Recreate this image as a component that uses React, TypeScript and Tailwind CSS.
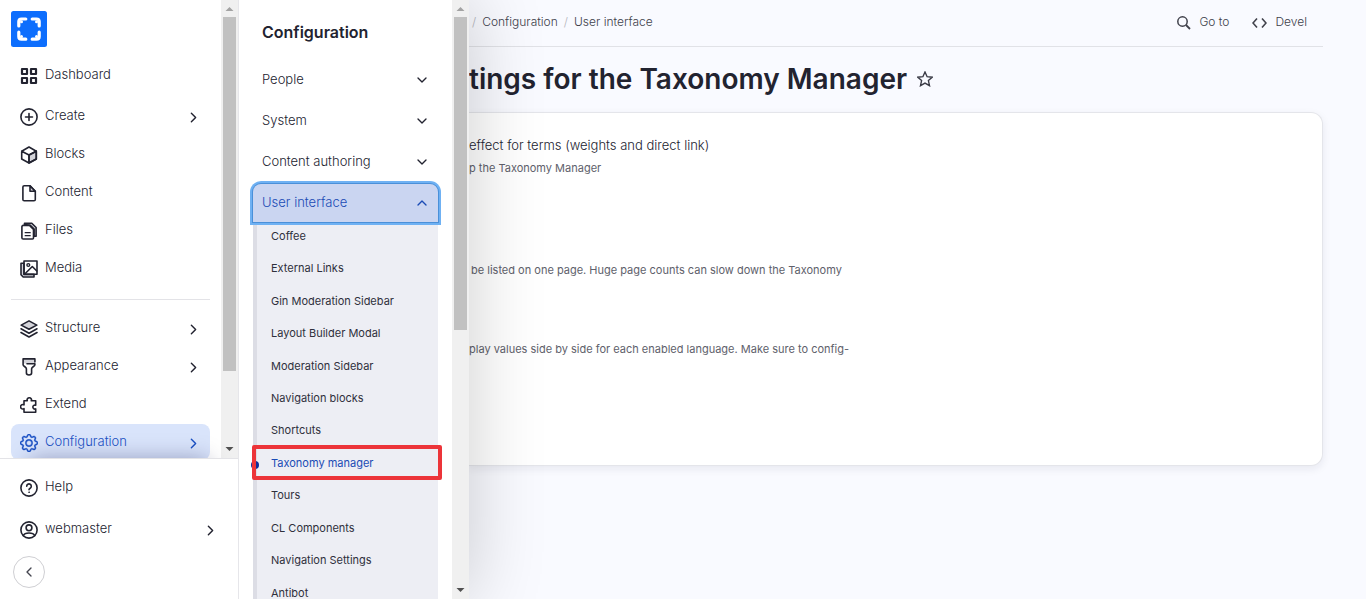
import React from 'react';
import { BsGear } from 'react-icons/bs';
import { ChevronDown, ChevronLeft, ChevronRight, ChevronUp } from 'lucide-react';

function Icon({ children }: { children: React.ReactNode }) {
  return (
    <svg
      className="shrink-0"
      width="18"
      height="18"
      viewBox="0 0 18 18"
      fill="none"
      stroke="currentColor"
      strokeWidth="1.6"
      strokeLinejoin="round"
      strokeLinecap="round"
      aria-hidden="true"
    >
      {children}
    </svg>
  );
}

const icons: Record<string, React.ReactNode> = {
  dashboard: (
    <Icon>
      <path d="M2 2h5v5H2zM11 2h5v5h-5zM2 11h5v5H2zM11 11h5v5h-5z" strokeWidth="2.2" />
    </Icon>
  ),
  create: (
    <Icon>
      <circle cx="9" cy="9" r="8.1" />
      <path d="M9 5.5v7M5.5 9h7" />
    </Icon>
  ),
  blocks: (
    <Icon>
      <path d="M9 9l7.3-3.8v7.8L9 17z" fill="#d4d4da" />
      <path d="M9 1l7.3 4.2v7.8L9 17l-7.3-4V5.2zM1.7 5.2L9 9l7.3-3.8M9 9v8" />
    </Icon>
  ),
  content: (
    <Icon>
      <path d="M10 1.8l5.3 5.4H10z" fill="#d4d4da" />
      <path d="M4.2 1.8H10l5.3 5.4v8.3a1.3 1.3 0 0 1-1.3 1.3H4.2a1.3 1.3 0 0 1-1.3-1.3V3.1a1.3 1.3 0 0 1 1.3-1.3z" />
    </Icon>
  ),
  files: (
    <Icon>
      <path d="M4.5 2.5V1.2h7.3l4.3 4.3v8.8h-2V7L10 3.2z" fill="#d4d4da" />
      <path d="M3.2 3.4h6.3l4 4V16a1 1 0 0 1-1 1H3.2a1.3 1.3 0 0 1-1.3-1.3v-11a1.3 1.3 0 0 1 1.3-1.3z" fill="#fff" />
      <path d="M5.2 10.7h5M5.2 13.7h5" strokeWidth="1.3" />
    </Icon>
  ),
  media: (
    <Icon>
      <path d="M4 3.3H1v11.400l2.200 2.300H14v-2.600H4z" fill="#d4d4da" />
      <path d="M4 1h13v13.200H4z" />
      <circle cx="8.3" cy="5" r="1.4" strokeWidth="1.4" />
      <path d="M5 13.7l7.3-7.2 4.5 4.5" />
    </Icon>
  ),
  structure: (
    <Icon>
      <path d="M9 .9l7.8 4.2L9 9.300 1.200 5.100z" fill="#d4d4da" />
      <path d="M1 8.800l8 4.400 8-4.400M1 12.500l8 4.500 8-4.500" />
    </Icon>
  ),
  appearance: (
    <Icon>
      <path d="M3.2 1.200h11.600v4.300H3.200z" fill="#d4d4da" stroke="none" />
      <path d="M14.900 4V.9H3.100v5.900c0 1.500 3.300 2 3.300 4v4.300c0 2.500 5.200 2.500 5.200 0v-4.300c0-2 3.300-2.500 3.300-4V5.800H7" />
    </Icon>
  ),
  extend: (
    <Icon>
      <path d="M4 4.800h3.300a2.200 2.200 0 1 1 4 0h4.400v4.500a2 2 0 1 0 0 3.600v3.400H4v-3.700a2.200 2.200 0 1 1 0-3.700z" />
    </Icon>
  ),
  configuration: <BsGear size={18} stroke="currentColor" strokeWidth={0.4} className="shrink-0" />,
  help: (
    <Icon>
      <circle cx="9" cy="9" r="8.1" />
      <path d="M6.7 7.2a2.300 2.300 0 1 1 3.500 2c-.8.5-1.200.8-1.200 1.600" />
      <circle cx="9" cy="13.2" r=".3" strokeWidth="1" />
    </Icon>
  ),
  user: (
    <Icon>
      <circle cx="9" cy="9" r="8.1" />
      <circle cx="9" cy="6.8" r="2.900" />
      <path d="M3.300 14.600c1.500-3.400 9.900-3.400 11.400 0" />
    </Icon>
  ),
};

interface NavItemProps {
  icon: string;
  label: string;
  expandable?: boolean;
  active?: boolean;
}

function NavItem({ icon, label, expandable = false, active = false }: NavItemProps) {
  const className = `flex h-9 w-full items-center gap-[7px] rounded-lg pl-[9px] pr-2 pt-0.5 text-left text-[13px] font-light ${
    active ? 'bg-[#d9e4fb] text-[#1a50c4]' : 'text-[#222330]'
  }`;
  const content = (
    <>
      {icons[icon]}
      <span className="pb-0.5">{label}</span>
      {expandable && <ChevronRight size={17} className="ml-auto shrink-0" />}
    </>
  );
  return (
    <li>
      {expandable ? (
        <button type="button" className={className}>{content}</button>
      ) : (
        <a href="#" className={className}>{content}</a>
      )}
    </li>
  );
}

function ScrollTrack({ thumb }: { thumb: string }) {
  return (
    <div className="flex w-[17px] shrink-0 flex-col bg-[#f0f0f0] px-0.5" aria-hidden="true">
      <svg width="13" height="17" viewBox="0 0 13 17" className="shrink-0">
        <path d="M2.5 11l4-4 4 4z" fill="#a3a3a3" />
      </svg>
      <div className={`bg-[#c1c1c1] ${thumb}`} />
      <svg width="13" height="17" viewBox="0 0 13 17" className="mt-auto shrink-0">
        <path d="M2.5 6l4 4 4-4z" fill="#505050" />
      </svg>
    </div>
  );
}

function Logo() {
  return (
    <svg width="36" height="36" viewBox="0 0 36 36" aria-hidden="true">
      <rect width="36" height="36" rx="2.5" fill="#0d6efd" />
      <g fill="none" stroke="#fff" strokeWidth="3.2" strokeLinecap="round" strokeLinejoin="round">
        <path d="M14.800 8H10.500Q7.800 8 7.800 10.700V15M21.200 8h4.300q2.700 0 2.700 2.700V15M14.800 28.200H10.500q-2.700 0-2.700-2.700V21.200M21.200 28.200h4.300q2.700 0 2.700-2.700V21.200" />
      </g>
      <g fill="#fff">
        <circle cx="10.5" cy="10.7" r="1.5" />
        <circle cx="25.5" cy="10.7" r="1.5" />
        <circle cx="10.5" cy="25.5" r="1.5" />
        <circle cx="25.5" cy="25.5" r="1.5" />
      </g>
    </svg>
  );
}

function Sidebar() {
  return (
    <nav aria-label="Administration" className="z-20 flex w-[239px] shrink-0 flex-col border-r border-[#e6e6ea] bg-white">
      <div className="flex min-h-0 flex-1 overflow-hidden">
        <div className="min-w-0 flex-1 overflow-hidden px-[11px] pt-[11px]">
          <a href="#" aria-label="Home" className="block h-[46px] w-9">
            <Logo />
          </a>
          <ul>
            <NavItem icon="dashboard" label="Dashboard" />
          </ul>
          <ul className="mt-[5px] flex flex-col gap-0.5">
            <NavItem icon="create" label="Create" expandable />
            <NavItem icon="blocks" label="Blocks" />
            <NavItem icon="content" label="Content" />
            <NavItem icon="files" label="Files" />
            <NavItem icon="media" label="Media" />
          </ul>
          <ul className="mt-[13px] flex flex-col gap-0.5 border-t border-[#e3e3e7] pt-2.5">
            <NavItem icon="structure" label="Structure" expandable />
            <NavItem icon="appearance" label="Appearance" expandable />
            <NavItem icon="extend" label="Extend" />
            <NavItem icon="configuration" label="Configuration" expandable active />
          </ul>
        </div>
        <ScrollTrack thumb="h-[354px]" />
      </div>
      <div className="z-10 border-t border-[#e3e3e7] bg-white px-[11px] pb-[11px] pt-2.5 shadow-[0_-28px_22px_-30px_rgba(0,0,60,0.35)]">
        <ul className="flex flex-col gap-1.5">
          <NavItem icon="help" label="Help" />
          <NavItem icon="user" label="webmaster" expandable />
        </ul>
        <button
          type="button"
          aria-label="Collapse sidebar"
          className="ml-0.5 mt-[9px] flex size-8 items-center justify-center rounded-full border border-[#cfcfd3] text-[#44454f]"
        >
          <ChevronLeft size={16} />
        </button>
      </div>
    </nav>
  );
}

const links = [
  'Coffee',
  'External Links',
  'Gin Moderation Sidebar',
  'Layout Builder Modal',
  'Moderation Sidebar',
  'Navigation blocks',
  'Shortcuts',
  'Taxonomy manager',
  'Tours',
  'CL Components',
  'Navigation Settings',
  'Antibot',
];

function Flyout() {
  return (
    <section className="z-10 flex w-[230px] shrink-0 bg-white shadow-[0_0_72px_rgba(0,0,0,0.2)]">
      <div className="min-w-0 flex-1 overflow-hidden px-[14px] pt-5">
        <h2 className="mb-[17px] pl-[9px] text-[16px] leading-6 font-semibold text-[#222330]">Configuration</h2>
        <div className="flex flex-col gap-[3px]">
          {['People', 'System', 'Content authoring'].map((label) => (
            <button key={label} type="button" className="flex h-[38px] items-center justify-between pl-[9px] pr-2 text-[13px] font-light text-[#222330]">
              <span>{label}</span>
              <ChevronDown size={16} />
            </button>
          ))}
          <button
            type="button"
            aria-expanded="true"
            className="relative z-10 flex h-[38px] items-center justify-between rounded-t-lg bg-[#cad5f1] pl-[9px] pr-2 text-[13px] font-light text-[#1a4bb5] shadow-[0_0_0_1px_#4a90d9,0_0_0_3px_#6fb1f3]"
          >
            <span>User interface</span>
            <ChevronUp size={16} />
          </button>
        </div>
        <ul className="-mt-0.5 flex h-[389px] flex-col border-l-4 border-[#dcdde5] bg-[#edeef4] text-[11px]">
          {links.map((label) => {
            const current = label === 'Taxonomy manager';
            return (
              <li key={label} className="relative flex flex-1 items-center pl-3.5">
                <a href="#" className={current ? 'text-[#1a4bb5]' : 'text-[#2f303c]'}>{label}</a>
                {current && (
                  <>
                    <span className="absolute -left-1.5 top-3.5 size-2 rounded-full bg-[#0d2f9b]" />
                    <span className="absolute -bottom-px -left-[5px] -right-1 -top-0.5 rounded-xs border-4 border-[#ec3439]" />
                  </>
                )}
              </li>
            );
          })}
        </ul>
      </div>
      <ScrollTrack thumb="h-[313px]" />
    </section>
  );
}

function Main() {
  return (
    <main className="min-w-0 flex-1 overflow-hidden pr-[43px]">
      <header className="flex h-[47px] items-center justify-between border-b border-[#e1e2e7] pb-[3px] pr-4 text-[12px] font-light text-[#40414b]">
        <nav aria-label="Breadcrumb" className="flex gap-1.5 pl-[3px]">
          <span className="text-[#b4b5bc]">/</span>
          <a href="#">Configuration</a>
          <span className="text-[#b4b5bc]">/</span>
          <a href="#">User interface</a>
        </nav>
        <div className="flex gap-[23px]">
          <button type="button" className="flex items-center gap-2">
            <svg width="15" height="15" viewBox="0 0 15 15" fill="none" stroke="currentColor" strokeWidth="1.5" className="mt-0.5">
              <circle cx="6.5" cy="6.5" r="4.7" />
              <path d="M10 10l4 4" strokeWidth="1.8" />
            </svg>
            Go to
          </button>
          <button type="button" className="flex items-center gap-2">
            <svg width="15" height="12" viewBox="0 0 15 12" fill="none" stroke="currentColor" strokeWidth="1.6" className="mt-0.5">
              <path d="M5 1.5L1 6l4 4.5M10 1.5L14 6l-4 4.5" />
            </svg>
            Devel
          </button>
        </div>
      </header>
      <div className="flex h-[65px] items-center gap-2.5 pb-0.5">
        <h1 className="text-[28px] font-semibold whitespace-nowrap text-[#222330]">tings for the Taxonomy Manager</h1>
        <button type="button" aria-label="Add to shortcuts" className="text-[#3a3b46]">
          <svg width="16" height="16" viewBox="0 0 16 16" fill="none" stroke="currentColor" strokeWidth="1.4">
            <path d="M8 1l2.100 4.700 5.100.5-3.800 3.400 1.100 5.100L8 12.100l-4.500 2.600 1.100-5.100L.8 6.200l5.100-.5z" />
          </svg>
        </button>
      </div>
      <div className="h-[354px] rounded-r-xl border border-l-0 border-[#e4e5ea] bg-white pt-[22px] shadow-[0_3px_8px_rgba(30,30,70,0.08)]">
        <p className="text-[13px] leading-5 font-light text-[#222330]">effect for terms (weights and direct link)</p>
        <p className="mt-[5px] text-[11px] leading-4 text-[#60616b]">p the Taxonomy Manager</p>
        <p className="mt-[86px] pl-0.5 text-[11px] leading-4 text-[#60616b]">
          be listed on one page. Huge page counts can slow down the Taxonomy
        </p>
        <p className="mt-[63px] text-[11px] leading-4 text-[#60616b]">
          play values side by side for each enabled language. Make sure to config-
        </p>
      </div>
    </main>
  );
}

export default function App() {
  return (
    <div className="flex h-screen overflow-hidden bg-[#f9faff] font-['Inter','Liberation_Sans',sans-serif]">
      <Sidebar />
      <Flyout />
      <Main />
    </div>
  );
}
